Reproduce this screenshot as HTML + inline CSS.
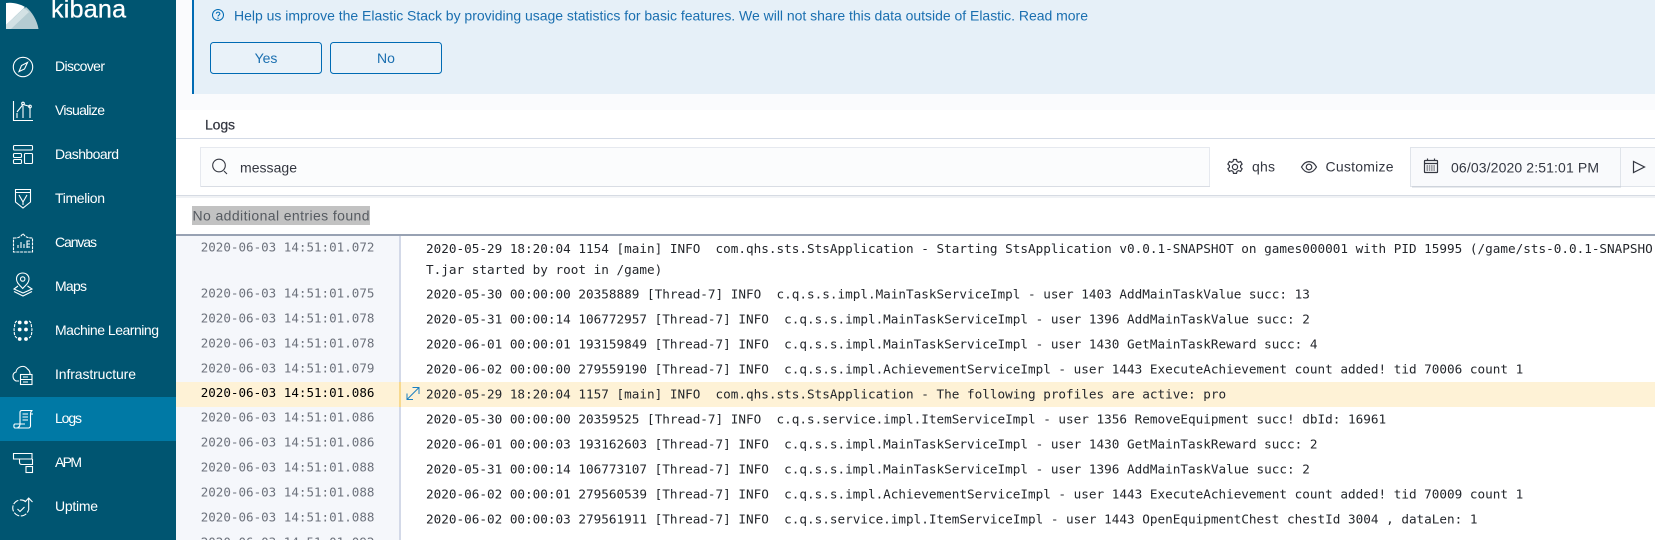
<!DOCTYPE html>
<html><head><meta charset="utf-8"><title>Logs - Kibana</title>
<style>
html,body{margin:0;padding:0;width:1655px;height:540px;overflow:hidden;background:#fff}
svg{display:block}
text{white-space:pre}
.s{font-family:"Liberation Sans",sans-serif}
.nav{font-size:14px;fill:#fff}
.m{font-family:"DejaVu Sans Mono","Liberation Mono",monospace;font-size:12.55px}
.w{font-size:12.67px}
.t{fill:#6d727c}
.g{fill:#23262b}
.i{fill:none;stroke:#fff;stroke-width:1.1}
.b{fill:none;stroke:#343741;stroke-width:1.2}
</style></head><body>
<svg width="1655" height="540" viewBox="0 0 1655 540" xmlns="http://www.w3.org/2000/svg">
<!-- backgrounds -->
<rect width="1655" height="540" fill="#fff"/>
<rect x="176" width="1479" height="110" fill="#fafbfd"/>
<rect x="192" width="1463" height="94" fill="#e6f0f8"/>
<rect x="192" width="2" height="94" fill="#006bb4"/>
<!-- callout -->
<g fill="none" stroke="#006bb4" stroke-width="1">
<circle cx="218" cy="15" r="5.5"/>
<path d="M216.2 13.6c.2-1 1-1.5 1.9-1.5 1 0 1.8.7 1.8 1.6 0 1.3-1.9 1.4-1.9 2.8"/>
</g><circle cx="218" cy="18.2" r=".7" fill="#006bb4"/>
<text class="s" x="234" y="20.5" font-size="14" fill="#1a6fb0" textLength="854" lengthAdjust="spacing">Help us improve the Elastic Stack by providing usage statistics for basic features. We will not share this data outside of Elastic. Read more</text>
<rect x="210.5" y="42.5" width="111" height="31" rx="3" fill="#e9f2f9" stroke="#006bb4"/>
<rect x="330.5" y="42.5" width="111" height="31" rx="3" fill="#e9f2f9" stroke="#006bb4"/>
<text class="s" x="266" y="63" font-size="14" fill="#1a6fb0" text-anchor="middle">Yes</text>
<text class="s" x="386" y="63" font-size="14" fill="#1a6fb0" text-anchor="middle">No</text>
<!-- tab -->
<text class="s" x="205" y="129.5" font-size="14" fill="#343741" textLength="30" lengthAdjust="spacing" stroke="#343741" stroke-width=".25">Logs</text>
<rect x="176" y="138" width="1479" height="1" fill="#d3dae6"/>
<!-- toolbar -->
<rect x="176" y="195" width="1479" height="1" fill="#d6dbe3"/>
<rect x="176" y="196" width="1479" height="2" fill="#f0f2f5"/>
<rect x="200.5" y="147.5" width="1009" height="39" fill="#fbfcfd" stroke="#e6e9ef"/>
<rect x="201" y="186" width="1009" height="1" fill="#d9dde4"/>
<circle cx="219" cy="165.5" r="6.3" fill="none" stroke="#343741" stroke-width="1.1"/>
<path d="M224 171l3 3" stroke="#343741" stroke-width="1.1"/>
<text class="s" x="240" y="172.5" font-size="14" fill="#343741" textLength="57" lengthAdjust="spacing">message</text>
<!-- gear -->
<g class="b"><circle cx="1235" cy="167" r="2.6"/>
<path d="M1233.5 159.5h3l.5 2 1.6.8 2-.8 1.5 2.6-1.5 1.4v1.9l1.5 1.4-1.5 2.6-2-.8-1.6.8-.5 2h-3l-.5-2-1.6-.8-2 .8-1.5-2.6 1.5-1.4v-1.9l-1.5-1.4 1.5-2.6 2 .8 1.6-.8z"/></g>
<text class="s" x="1252" y="171.5" font-size="14" fill="#343741" textLength="23" lengthAdjust="spacing">qhs</text>
<!-- eye -->
<g class="b"><path d="M1301.5 167c2-3.6 4.800-5.400 7.500-5.400s5.500 1.800 7.500 5.400c-2 3.600-4.800 5.400-7.500 5.400s-5.500-1.800-7.500-5.400z"/><circle cx="1309" cy="167" r="2.800"/></g>
<text class="s" x="1325.500" y="171.500" font-size="14" fill="#343741" textLength="68" lengthAdjust="spacing">Customize</text>
<!-- date -->
<rect x="1410.500" y="147.500" width="250" height="39" fill="#f9fafc" stroke="#e0e4ea"/>
<rect x="1412" y="186" width="209" height="1.500" fill="#cfd4dc"/>
<rect x="1620" y="148" width="1" height="38" fill="#e0e4ea"/>
<g class="b"><rect x="1424.500" y="160.500" width="13" height="12" rx=".5"/><path d="M1424.500 163.500h13M1427.500 158.500v2M1434.500 158.500v2"/><path d="M1426.500 166h9M1426.500 168h9M1426.500 170h9" stroke-dasharray="1.500 .8" stroke-width="1"/></g>
<text class="s" x="1451" y="172.500" font-size="14" fill="#343741" textLength="148" lengthAdjust="spacing">06/03/2020 2:51:01 PM</text>
<path class="b" d="M1633.500 161.500v11l11-5.500z"/>
<!-- no entries -->
<rect x="192" y="206" width="178" height="19" fill="#c2c2c2"/>
<text class="s" x="192.500" y="220.500" font-size="14" fill="#555a60" textLength="177" lengthAdjust="spacing">No additional entries found</text>
<!-- log table -->
<rect x="176" y="236" width="223" height="304" fill="#f5f7fb"/>
<rect x="399" y="236" width="2" height="304" fill="#d3d9e8"/>
<rect x="176" y="382" width="1479" height="25" fill="#fef2d6"/>
<rect x="399" y="382" width="2" height="25" fill="#f7d98e"/>
<rect x="176" y="234" width="1479" height="2" fill="#98a2b3"/>
<path d="M407 399.500l12-12M412.500 387.500h6.500v6.500M413 399.500h-6v-6" fill="none" stroke="#1a7fc0" stroke-width="1"/>
<g class="m t">
<text x="200.700" y="251.300">2020-06-03 14:51:01.072</text>
<text x="200.700" y="297.300">2020-06-03 14:51:01.075</text>
<text x="200.700" y="322.300">2020-06-03 14:51:01.078</text>
<text x="200.700" y="347.300">2020-06-03 14:51:01.078</text>
<text x="200.700" y="372.300">2020-06-03 14:51:01.079</text>
<text x="200.700" y="396.800" style="fill:#000">2020-06-03 14:51:01.086</text>
<text x="200.700" y="421.500">2020-06-03 14:51:01.086</text>
<text x="200.700" y="446.500">2020-06-03 14:51:01.086</text>
<text x="200.700" y="471.500">2020-06-03 14:51:01.088</text>
<text x="200.700" y="496.500">2020-06-03 14:51:01.088</text>
<text x="200.700" y="521.500">2020-06-03 14:51:01.088</text>
<text x="200.700" y="546.500">2020-06-03 14:51:01.092</text>
</g>
<g class="m g w">
<text x="426" y="253">2020-05-29 18:20:04 1154 [main] INFO  com.qhs.sts.StsApplication - Starting StsApplication v0.0.1-SNAPSHOT on games000001 with PID 15995 (/game/sts-0.0.1-SNAPSHO</text>
<text x="426" y="274">T.jar started by root in /game)</text>
<text x="426" y="298.700">2020-05-30 00:00:00 20358889 [Thread-7] INFO  c.q.s.s.impl.MainTaskServiceImpl - user 1403 AddMainTaskValue succ: 13</text>
<text x="426" y="323.700">2020-05-31 00:00:14 106772957 [Thread-7] INFO  c.q.s.s.impl.MainTaskServiceImpl - user 1396 AddMainTaskValue succ: 2</text>
<text x="426" y="348.700">2020-06-01 00:00:01 193159849 [Thread-7] INFO  c.q.s.s.impl.MainTaskServiceImpl - user 1430 GetMainTaskReward succ: 4</text>
<text x="426" y="373.700">2020-06-02 00:00:00 279559190 [Thread-7] INFO  c.q.s.s.impl.AchievementServiceImpl - user 1443 ExecuteAchievement count added! tid 70006 count 1</text>
<text x="426" y="398.700">2020-05-29 18:20:04 1157 [main] INFO  com.qhs.sts.StsApplication - The following profiles are active: pro</text>
<text x="426" y="423.500">2020-05-30 00:00:00 20359525 [Thread-7] INFO  c.q.s.service.impl.ItemServiceImpl - user 1356 RemoveEquipment succ! dbId: 16961</text>
<text x="426" y="448.500">2020-06-01 00:00:03 193162603 [Thread-7] INFO  c.q.s.s.impl.MainTaskServiceImpl - user 1430 GetMainTaskReward succ: 2</text>
<text x="426" y="473.500">2020-05-31 00:00:14 106773107 [Thread-7] INFO  c.q.s.s.impl.MainTaskServiceImpl - user 1396 AddMainTaskValue succ: 2</text>
<text x="426" y="498.500">2020-06-02 00:00:01 279560539 [Thread-7] INFO  c.q.s.s.impl.AchievementServiceImpl - user 1443 ExecuteAchievement count added! tid 70009 count 1</text>
<text x="426" y="523.500">2020-06-02 00:00:03 279561911 [Thread-7] INFO  c.q.s.service.impl.ItemServiceImpl - user 1443 OpenEquipmentChest chestId 3004 , dataLen: 1</text>
<text x="426" y="549.800">2020-05-31 00:00:14 106774211 [Thread-7] INFO  c.q.s.s.impl.MainTaskServiceImpl - user 1396 AddMainTaskValue succ: 1</text>
</g>
<!-- sidebar -->
<rect width="176" height="540" fill="#005571"/>
<rect y="397" width="176" height="44" fill="#0079a5"/>
<!-- logo -->
<path d="M6 29H38.500C37 20 32 12 26 7L6 25Z" fill="#b5ccd2"/>
<path d="M6 25L24 8 29 12 11 29H6Z" fill="#d3e1e4"/>
<path d="M6 3C13 2 20 4 25 7L6 25Z" fill="#fff"/>
<text class="s" x="51" y="17.500" font-size="25" fill="#fff" stroke="#fff" stroke-width=".3" textLength="75" lengthAdjust="spacing">kibana</text>
<!-- nav labels -->
<g class="s nav">
<text x="55" y="71" textLength="50" lengthAdjust="spacing">Discover</text>
<text x="55" y="115" textLength="50" lengthAdjust="spacing">Visualize</text>
<text x="55" y="159" textLength="64" lengthAdjust="spacing">Dashboard</text>
<text x="55" y="203" textLength="50" lengthAdjust="spacing">Timelion</text>
<text x="55" y="247" textLength="42" lengthAdjust="spacing">Canvas</text>
<text x="55" y="291" textLength="32" lengthAdjust="spacing">Maps</text>
<text x="55" y="335" textLength="104" lengthAdjust="spacing">Machine Learning</text>
<text x="55" y="379" textLength="81" lengthAdjust="spacing">Infrastructure</text>
<text x="55" y="423" textLength="27" lengthAdjust="spacing">Logs</text>
<text x="55" y="467" textLength="27" lengthAdjust="spacing">APM</text>
<text x="55" y="511" textLength="43" lengthAdjust="spacing">Uptime</text>
</g>
<!-- nav icons -->
<g class="i">
<!-- discover -->
<circle cx="23" cy="67" r="9.700"/>
<path d="M27.500 62.500L24.500 69 19 71.500 21.500 65.500Z"/>
<!-- visualize -->
<path d="M13.500 101V120.500H33"/>
<path d="M17 112L23 104.500 30 106.500M17 113V118M23 106V118M30 108V118"/>
<circle cx="23" cy="103.500" r="1.300"/><circle cx="30" cy="106.500" r="1.300"/>
<!-- dashboard -->
<rect x="13.500" y="145.500" width="19" height="4.500" rx="1"/>
<rect x="13.500" y="153.500" width="8" height="4" rx="1"/>
<rect x="13.500" y="159.500" width="8" height="4" rx="1"/>
<rect x="24.500" y="153.500" width="8" height="10" rx="1"/>
<!-- timelion -->
<path d="M15.500 189.500H30.500V202L23 208 15.500 202Z"/>
<path d="M15.500 192.500H30.500M19 195L23 202 27 195M23 202V205"/>
<!-- canvas -->
<path d="M13.500 238C17 238 20 238 23 233.500 26 238 29 238 32.500 238V252H13.500Z" stroke-dasharray="3 .8"/>
<path d="M18 248V245M21 248V242M24 248V244M27 248V241H30M27 244H30M27 247H30"/>
<!-- maps -->
<path d="M22.700 288.500C19 284.500 16.500 282.500 16.500 279 16.500 275.500 19 273 22.700 273 26.300 273 29 275.500 29 279 29 282.500 26.500 284.500 22.700 288.500Z"/>
<circle cx="22.700" cy="279" r="2.200"/>
<path d="M18 286L14 289 23 293 32 289 27.500 286M14 291.500L23 296 32 291.500"/>
<!-- ml -->
<path d="M17 321C14 322 15 327 14 329 14.500 331 13.500 336 17 338M29 321C32 322 31 327 32 329 31.500 331 32.500 336 29 338" stroke-dasharray="3 1"/>
<!-- infra -->
<path d="M19 381H16C12 379 12 373 16 372 16.500 367 24 364 27.500 369 29 370 30 372 30 374"/>
<rect x="20.500" y="374.500" width="11.500" height="10"/>
<path d="M20.500 379.500H32M23 377H28M23 382H28"/>
<!-- logs -->
<path d="M17.500 427.500C19.500 427.500 20 425 20 424V412.500C20 411 21 410.500 22 410.500H32.500C31 411 30.500 412 30.500 414V426C30.500 427 29.500 428 28.500 428H15C13.500 428 13.500 424 15 424H25"/>
<path d="M22.500 414H28M22.500 417H28M22.500 420H28M30.500 414H33"/>
<!-- apm -->
<path d="M13.500 453.500H32V459H13.500Z"/>
<path d="M19.500 459V462.500C19.500 464 20.500 464.500 22 464.500H32.500V459"/>
<rect x="26" y="466.500" width="6.500" height="6"/>
<!-- uptime -->
<path d="M25.500 501.500A8 8 0 1 0 28.500 510" stroke-dasharray="6 1.500"/>
<path d="M28.700 510V498.500M25 502L28.700 498 32.500 502"/>
<path d="M17.500 509L20 511.500 24.500 507"/>
</g>
<g fill="#fff">
<circle cx="19.700" cy="322.500" r="1.900"/><circle cx="26" cy="322.500" r="1.900"/>
<circle cx="19.700" cy="329.500" r="1.900"/><circle cx="26" cy="329.500" r="1.900"/>
<circle cx="19.700" cy="339" r="1.900"/><circle cx="26" cy="339" r="1.900"/>
</g>
</svg>
</body></html>
